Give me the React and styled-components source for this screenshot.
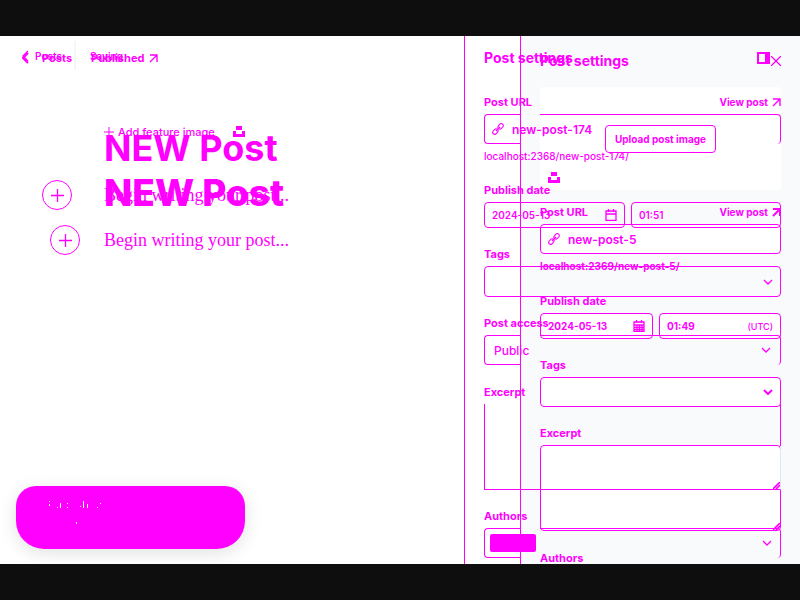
import React from "react";
import styled, { createGlobalStyle } from "styled-components";

const ink = "#ff00ff";

const GlobalStyle = createGlobalStyle`
  * { box-sizing: border-box; }
  body { margin: 0; background: #0e0e0e; font-family: Inter, "Liberation Sans", sans-serif; color: ${ink}; }
  button, input, textarea, select { font: inherit; color: inherit; margin: 0; }
`;

const Page = styled.div`
  min-height: 100vh;
  padding: 36px 0;
  display: grid;
`;

const Stage = styled.div`
  display: grid;
  grid-template: minmax(0, 1fr) / minmax(0, 1fr);
  height: calc(100vh - 72px);
  overflow: hidden;
  background: #fff;
`;

const Layer = styled.div`
  grid-area: 1 / 1;
  display: grid;
  grid-template-columns: minmax(0, 1fr) ${(p) => p.$side}px;
  min-height: 0;
`;

const Editor = styled.main`
  display: flex;
  flex-direction: column;
  min-width: 0;
  min-height: 0;
`;

const TopBar = styled.header`
  display: flex;
  align-items: center;
  height: ${(p) => p.$height}px;
  padding-left: 22px;
  font-size: ${(p) => p.$size}px;
  line-height: 16px;
  font-weight: ${(p) => p.$weight};
`;

const BackLink = styled.a`
  display: flex;
  align-items: center;
  gap: ${(p) => p.$gap}px;
  width: ${(p) => p.$width}px;
  color: inherit;
  text-decoration: none;
`;

const Rule = styled.span`
  width: 2px;
  height: 29px;
  margin-right: 14px;
  background: #f4f7fa;
`;

const StatusLink = styled.a`
  display: flex;
  align-items: center;
  gap: 5px;
  color: inherit;
  text-decoration: none;
`;

const Canvas = styled.section`
  display: flex;
  flex-direction: column;
  padding-top: ${(p) => p.$top}px;
`;

const FeatureRow = styled.div`
  display: flex;
  align-items: center;
  gap: 18px;
  height: 16px;
  margin: 0 0 29px 104px;
`;

const TextButton = styled.button`
  display: flex;
  align-items: center;
  gap: 4px;
  padding: 0;
  border: 0;
  background: none;
  font-size: 11px;
  line-height: 16px;
  font-weight: 500;
`;

const Title = styled.h1`
  margin: 0 0 0 104px;
  font-size: ${(p) => p.$size}px;
  line-height: 48px;
  font-weight: ${(p) => p.$weight};
`;

const WriteRow = styled.div`
  display: flex;
  align-items: center;
  height: 30px;
  margin-top: 8px;
  padding-left: ${(p) => p.$indent}px;
  gap: ${(p) => p.$gap}px;
  font: 18px/24px "Liberation Serif", serif;
`;

const AddButton = styled.button`
  display: grid;
  place-items: center;
  width: 30px;
  height: 30px;
  padding: 0;
  border: 1px solid ${ink};
  border-radius: 50%;
  background: #fff;
`;

const Toast = styled.div`
  width: 229px;
  height: 63px;
  margin: auto 0 15px 16px;
  padding: 14px 33px;
  border-radius: 20px 20px 28px 28px;
  background: ${ink};
  box-shadow: 0 4px 18px rgba(0, 0, 0, 0.12);
`;

const Sidebar = styled.aside`
  display: flex;
  flex-direction: column;
  min-height: 0;
  padding: ${(p) => p.$top}px 19px 0;
  border-left: 1px solid ${ink};
  background: ${(p) => p.$fill};
  overflow: hidden;
`;

const SideHeader = styled.div`
  display: flex;
  align-items: center;
  justify-content: space-between;
  flex: none;
  height: 20px;
  margin-bottom: ${(p) => p.$after}px;
  padding-right: ${(p) => p.$inset || 0}px;
`;

const SideTitle = styled.h2`
  margin: 0;
  font-size: 14px;
  line-height: 20px;
  font-weight: 700;
`;

const IconButton = styled.button`
  display: grid;
  place-items: center;
  padding: 0;
  border: 0;
  background: none;
`;

const UploadCard = styled.div`
  display: flex;
  flex: none;
  flex-direction: column;
  justify-content: space-between;
  height: 103px;
  margin-bottom: 14px;
  padding: 38px 8px 6px;
  border-radius: 4px;
  background: #fff;
`;

const UploadButton = styled.button`
  align-self: center;
  height: 28px;
  padding: 0 9px;
  border: 1px solid ${ink};
  border-radius: 4px;
  background: #fff;
  font-size: 10px;
  font-weight: 700;
`;

const Group = styled.div`
  flex: none;
  height: ${(p) => p.$height}px;
`;

const LabelRow = styled.div`
  display: flex;
  justify-content: space-between;
  height: 16px;
  margin-bottom: 4px;
  font-size: 11px;
  line-height: 16px;
  font-weight: 700;
`;

const ViewLink = styled.a`
  display: flex;
  align-items: center;
  gap: 4px;
  color: inherit;
  text-decoration: none;
  font-size: 10px;
  font-weight: 700;
`;

const Field = styled.div`
  display: flex;
  align-items: center;
  height: ${(p) => p.$height || 30}px;
  padding: 0 7px;
  border: 1px solid ${ink};
  border-radius: 4px;
  background: ${(p) => p.$fill || "transparent"};
`;

const OpenField = styled.div`
  display: grid;
  grid-template: 100% / 37px minmax(0, 1fr);
  height: 30px;
`;

const OpenStart = styled.span`
  grid-area: 1 / 1;
  border: solid ${ink};
  border-width: 1px 0 1px 1px;
  border-radius: 4px 0 0 4px;
`;

const OpenEnd = styled.span`
  grid-area: 1 / 2;
  margin-left: 19px;
  border: solid ${ink};
  border-width: 1px 1px 0 0;
  border-radius: 0 4px 4px 0;
`;

const OpenContent = styled.div`
  grid-area: 1 / 1 / 2 / 3;
  display: flex;
  align-items: center;
  justify-content: space-between;
  padding: 0 ${(p) => p.$right || 8}px 0 ${(p) => p.$left || 8}px;
`;

const TextInput = styled.input`
  flex: 1;
  width: 0;
  min-width: 0;
  height: 100%;
  padding: 0 0 0 ${(p) => p.$indent || 0}px;
  border: 0;
  outline: 0;
  background: none;
  font-size: ${(p) => p.$size || 12}px;
  font-weight: ${(p) => p.$weight || 500};
`;

const Select = styled.select`
  flex: 1;
  padding: 0;
  border: 0;
  outline: 0;
  appearance: none;
  background: none;
  font-size: 12px;
  font-weight: 500;
`;

const Hint = styled.div`
  margin-top: 4px;
  font-size: 10px;
  line-height: 16px;
  font-weight: ${(p) => p.$weight};
`;

const DateRow = styled.div`
  display: grid;
  grid-template-columns: ${(p) => p.$columns};
  gap: 6px;
`;

const Area = styled.textarea`
  display: block;
  width: 100%;
  height: 86px;
  border: 1px solid ${ink};
  border-radius: 4px;
  background: #fff;
  resize: none;
  outline: 0;
`;

const OpenArea = styled(Area)`
  border-top: 0;
  border-right-color: #dde6ee;
  border-radius: 0;
  background: none;
`;

const AreaEdge = styled.span`
  height: 42px;
  border-right: 1px solid ${ink};
  pointer-events: none;
`;

const AreaWrap = styled.div`
  display: grid;
  & > * { grid-area: 1 / 1; }
  & > svg { place-self: end; margin: 1px; }
`;

const Chip = styled.span`
  width: 46px;
  height: 18px;
  border-radius: 2px;
  background: ${ink};
`;

const Zone = styled.span`
  font-size: 9px;
  font-weight: 500;
`;

const Icon = ({ w, h, box, sw = 1.3, children }) => (
  <svg width={w} height={h} viewBox={box || `0 0 ${w} ${h}`} fill="none" stroke={ink} strokeWidth={sw} aria-hidden="true">
    {children}
  </svg>
);
const Back = ({ sw }) => <Icon w={7} h={12} sw={sw}><path d="M6 1 1 6l5 5" /></Icon>;
const Arrow = ({ sw = 1.4 }) => <Icon w={9} h={9} sw={sw}><path d="M1 8 8 1M1 1h7v7" /></Icon>;
const Chevron = ({ sw = 1.3 }) => <Icon w={10} h={6} sw={sw}><path d="m1 1 4 4 4-4" /></Icon>;
const Plus = ({ s = 13 }) => <Icon w={s} h={s} box="0 0 13 13"><path d="M6.5 0v13M0 6.5h13" /></Icon>;
const Link = () => (
  <Icon w={12} h={12} sw={1.1}>
    <rect x="5.6" y="1.4" width="6" height="4" rx="2" transform="rotate(-48 8.6 3.4)" />
    <rect x="0.4" y="6.6" width="6" height="4" rx="2" transform="rotate(-48 3.4 8.6)" />
    <path d="m4 8 4-4" />
  </Icon>
);
const Unsplash = () => <Icon w={12} h={12} sw={0}><path fill={ink} d="M3 0h6v4H3zM0 5h3v3h6V5h3v6H0z" /></Icon>;
const Calendar = ({ busy }) => (
  <Icon w={12} h={12}>
    <path d="M1 2h10v9.3H1zM1 5h10M3.5 0v3M8.5 0v3" />
    {busy && <path d="M1 7.3h10M1 9.5h10M4 5v6M6.5 5v6M9 5v6" />}
  </Icon>
);
const Panel = () => <Icon w={13} h={12} sw={2}><path d="M1 1h11v10H1z" /><path d="M9 1h3v10H9z" fill={ink} /></Icon>;
const Grip = () => <Icon w={7} h={7} sw={1.6}><path d="M0 7 7 0M3 7l4-4" /></Icon>;
const Specks = () => (
  <svg width="56" height="26" aria-hidden="true">
    <path d="M0 1h1v1H0zM0 4h1v2H0zM11 3h1v5h-1zM8 7h1v1H8zM18 3h1v1h-1zM18 7h1v1h-1zM34 1h1v7h-1zM31 6h1v1h-1zM38 4h1v4h-1zM51 3h1v1h-1zM48 7h1v1h-1zM27 22h1v2h-1z" fill="#fff" />
  </svg>
);

function WideLayout() {
  return (
    <Layer $side={280}>
      <Editor>
        <TopBar $height={44} $size={11} $weight={700}>
          <BackLink href="#posts" $gap={13} $width={69}><Back sw={2} />Posts</BackLink>
          <StatusLink href="#published">Published <Arrow /></StatusLink>
        </TopBar>
        <Canvas $top={44}>
          <FeatureRow>
            <TextButton><Plus s={10} />Add feature image</TextButton>
            <Unsplash />
          </FeatureRow>
          <Title $size={37} $weight={800}>NEW Post</Title>
          <WriteRow $indent={50} $gap={24}>
            <AddButton aria-label="Add card"><Plus /></AddButton>Begin writing your post...
          </WriteRow>
        </Canvas>
        <Toast role="status"><Specks /></Toast>
      </Editor>
      <Sidebar $top={15} $fill="#f9fafc">
        <SideHeader $after={16}>
          <SideTitle>Post settings</SideTitle>
          <IconButton aria-label="Close"><Icon w={10} h={10}><path d="m0 0 10 10M10 0 0 10" /></Icon></IconButton>
        </SideHeader>
        <UploadCard>
          <UploadButton>Upload post image</UploadButton>
          <Unsplash />
        </UploadCard>
        <Group $height={89}>
          <LabelRow><label htmlFor="url-b">Post URL</label><ViewLink href="#view">View post <Arrow sw={2} /></ViewLink></LabelRow>
          <Field $fill="#fff"><Link /><TextInput id="url-b" $indent={8} $weight={600} defaultValue="new-post-5" /></Field>
          <Hint $weight={700}>localhost:2369/new-post-5/</Hint>
        </Group>
        <Group $height={64}>
          <LabelRow><label htmlFor="date-b">Publish date</label></LabelRow>
          <DateRow $columns="113px 1fr">
            <Field $height={26} $fill="#fff"><TextInput id="date-b" $size={10} $weight={700} defaultValue="2024-05-13" /><Calendar busy /></Field>
            <Field $height={26} $fill="#fff"><TextInput aria-label="Time" $size={10} $weight={700} defaultValue="01:49" /><Zone>(UTC)</Zone></Field>
          </DateRow>
        </Group>
        <Group $height={68}>
          <LabelRow><label htmlFor="tags-b">Tags</label></LabelRow>
          <Field $fill="#fff"><TextInput id="tags-b" /><Chevron sw={2} /></Field>
        </Group>
        <Group $height={125}>
          <LabelRow><label htmlFor="excerpt-b">Excerpt</label></LabelRow>
          <AreaWrap><Area id="excerpt-b" /><Grip /></AreaWrap>
        </Group>
        <LabelRow>Authors</LabelRow>
      </Sidebar>
    </Layer>
  );
}

function NarrowLayout() {
  return (
    <Layer $side={336}>
      <Editor>
        <TopBar $height={39} $size={10} $weight={600}>
          <BackLink href="#posts" $gap={6} $width={52}><Back />Posts</BackLink>
          <Rule />
          <span>Saving</span>
        </TopBar>
        <Canvas $top={49}>
          <Title $size={36} $weight={700}>NEW Post</Title>
          <WriteRow $indent={42} $gap={32}>
            <AddButton aria-label="Add card"><Plus /></AddButton>Begin writing your post...
          </WriteRow>
        </Canvas>
      </Editor>
      <Sidebar $top={12} $fill="transparent">
        <SideHeader $after={26} $inset={11}>
          <SideTitle>Post settings</SideTitle>
          <IconButton aria-label="Toggle panel"><Panel /></IconButton>
        </SideHeader>
        <Group $height={88}>
          <LabelRow><label htmlFor="url-a">Post URL</label><ViewLink href="#view">View post <Arrow /></ViewLink></LabelRow>
          <OpenField>
            <OpenStart /><OpenEnd />
            <OpenContent><Link /><TextInput id="url-a" $indent={8} $weight={600} defaultValue="new-post-174" /></OpenContent>
          </OpenField>
          <Hint $weight={500}>localhost:2368/new-post-174/</Hint>
        </Group>
        <Group $height={64}>
          <LabelRow><label htmlFor="date-a">Publish date</label></LabelRow>
          <DateRow $columns="141px 1fr">
            <Field $height={26}><TextInput id="date-a" $size={10} $weight={600} defaultValue="2024-05-13" /><Calendar /></Field>
            <Field $height={26}><TextInput aria-label="Time" $size={10} $weight={600} defaultValue="01:51" /></Field>
          </DateRow>
        </Group>
        <Group $height={69}>
          <LabelRow><label htmlFor="tags-a">Tags</label></LabelRow>
          <Field $height={31}><TextInput id="tags-a" /><Chevron /></Field>
        </Group>
        <Group $height={69}>
          <LabelRow><label htmlFor="access-a">Post access</label></LabelRow>
          <OpenField>
            <OpenStart /><OpenEnd />
            <OpenContent $left={10} $right={10}>
              <Select id="access-a"><option>Public</option></Select>
              <Chevron />
            </OpenContent>
          </OpenField>
        </Group>
        <Group $height={124}>
          <LabelRow><label htmlFor="excerpt-a">Excerpt</label></LabelRow>
          <AreaWrap><OpenArea id="excerpt-a" /><AreaEdge /><Grip /></AreaWrap>
        </Group>
        <Group $height={52}>
          <LabelRow>Authors</LabelRow>
          <OpenField>
            <OpenStart /><OpenEnd />
            <OpenContent $left={6} $right={9}><Chip /><Chevron /></OpenContent>
          </OpenField>
        </Group>
      </Sidebar>
    </Layer>
  );
}

export default function App() {
  return (
    <>
      <GlobalStyle />
      <Page><Stage><WideLayout /><NarrowLayout /></Stage></Page>
    </>
  );
}
